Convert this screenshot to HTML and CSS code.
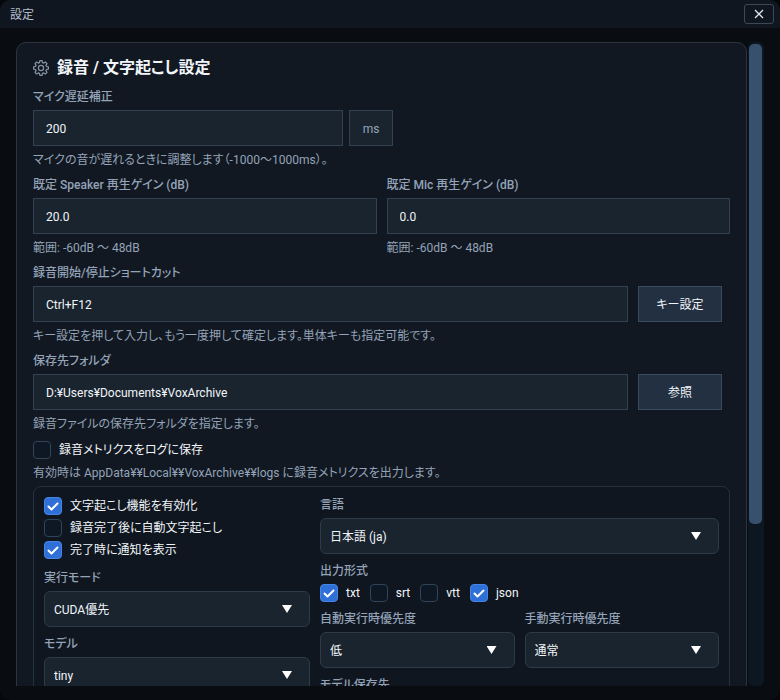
FILE: index.html
```
<!DOCTYPE html>
<html lang="ja">
<head>
    <meta charset="UTF-8">
    <meta name="viewport" content="width=device-width, initial-scale=1.0">
    <title>設定</title>
    <link rel="stylesheet" href="styles.css">
</head>
<body>
    <div class="window">
        <header class="titlebar">
            <span>設定</span>
            <button class="close" type="button" aria-label="閉じる">
                <svg width="10" height="10" viewBox="0 0 10 10"><path d="M1 1L9 9M9 1L1 9" stroke="currentColor" stroke-width="1.3" fill="none"/></svg>
            </button>
        </header>

        <div class="content">
            <main class="card">
                <h1>
                    <svg width="16" height="16" viewBox="0 0 16 16" fill="none" stroke="currentColor" stroke-width="1.2" stroke-linejoin="round">
                        <path d="M6.9.6h2.2l.4 2 1.2.5L12.4 2 14 3.6l-1.1 1.7.5 1.2 2 .4v2.2l-2 .4-.5 1.2 1.1 1.7-1.6 1.6-1.7-1.1-1.2.5-.4 2H6.9l-.4-2-1.2-.5L3.6 14 2 12.4l1.1-1.7-.5-1.2-2-.4V6.9l2-.4.5-1.2L2 3.6 3.6 2l1.7 1.1 1.2-.5z"/>
                        <circle cx="8" cy="8" r="2.6"/>
                    </svg>
                    録音 / 文字起こし設定
                </h1>

                <div class="field">
                    <label for="delay">マイク遅延補正</label>
                    <div class="row delay">
                        <input type="text" id="delay" value="200">
                        <span class="unit">ms</span>
                    </div>
                    <p class="hint">マイクの音が遅れるときに調整します（-1000～1000ms）。</p>
                </div>

                <div class="columns">
                    <div class="field">
                        <label for="speaker">既定 Speaker 再生ゲイン (dB)</label>
                        <input type="text" id="speaker" value="20.0">
                        <p class="hint">範囲: -60dB ～ 48dB</p>
                    </div>
                    <div class="field">
                        <label for="mic">既定 Mic 再生ゲイン (dB)</label>
                        <input type="text" id="mic" value="0.0">
                        <p class="hint">範囲: -60dB ～ 48dB</p>
                    </div>
                </div>

                <div class="field">
                    <label for="shortcut">録音開始/停止ショートカット</label>
                    <div class="row">
                        <input type="text" id="shortcut" value="Ctrl+F12">
                        <button class="btn" type="button">キー設定</button>
                    </div>
                    <p class="hint">キー設定を押して入力し、もう一度押して確定します。単体キーも指定可能です。</p>
                </div>

                <div class="field">
                    <label for="folder">保存先フォルダ</label>
                    <div class="row">
                        <input type="text" id="folder" value="D:¥Users¥Documents¥VoxArchive">
                        <button class="btn" type="button">参照</button>
                    </div>
                    <p class="hint">録音ファイルの保存先フォルダを指定します。</p>
                </div>

                <label class="check"><input type="checkbox">録音メトリクスをログに保存</label>
                <p class="hint">有効時は AppData¥¥Local¥¥VoxArchive¥¥logs に録音メトリクスを出力します。</p>

                <section class="panel">
                    <div>
                        <div class="checks">
                            <label class="check"><input type="checkbox" checked>文字起こし機能を有効化</label>
                            <label class="check"><input type="checkbox">録音完了後に自動文字起こし</label>
                            <label class="check"><input type="checkbox" checked>完了時に通知を表示</label>
                        </div>
                        <div class="option">
                            <label for="mode">実行モード</label>
                            <div class="select"><select id="mode"><option>CUDA優先</option></select></div>
                        </div>
                        <div class="option">
                            <label for="model">モデル</label>
                            <div class="select"><select id="model"><option>tiny</option></select></div>
                        </div>
                    </div>
                    <div>
                        <div class="option">
                            <label for="language">言語</label>
                            <div class="select"><select id="language"><option>日本語 (ja)</option></select></div>
                        </div>
                        <fieldset class="option">
                            <legend>出力形式</legend>
                            <div class="formats">
                                <label class="check"><input type="checkbox" checked>txt</label>
                                <label class="check"><input type="checkbox">srt</label>
                                <label class="check"><input type="checkbox">vtt</label>
                                <label class="check"><input type="checkbox" checked>json</label>
                            </div>
                        </fieldset>
                        <div class="columns">
                            <div class="option">
                                <label for="auto">自動実行時優先度</label>
                                <div class="select"><select id="auto"><option>低</option></select></div>
                            </div>
                            <div class="option">
                                <label for="manual">手動実行時優先度</label>
                                <div class="select"><select id="manual"><option>通常</option></select></div>
                            </div>
                        </div>
                        <div class="option">
                            <label for="modeldir">モデル保存先</label>
                            <input type="text" id="modeldir">
                        </div>
                    </div>
                </section>
            </main>
            <div class="scrollbar"><div class="thumb"></div></div>
        </div>
    </div>
</body>
</html>
```
FILE: styles.css
```
* {
    box-sizing: border-box;
}

body {
    margin: 0;
    background-color: #05070a;
    color: #f1f5f9;
    font-family: Roboto, "Noto Sans CJK JP", sans-serif;
    font-size: 12px;
    line-height: 16px;
    font-feature-settings: "palt";
}

input, select, button {
    color: inherit;
    font: inherit;
    font-feature-settings: inherit;
}

.window {
    display: flex;
    flex-direction: column;
    height: 100vh;
    border-radius: 10px;
    background-color: #090d12;
    overflow: hidden;
}

.titlebar {
    display: flex;
    flex: none;
    justify-content: space-between;
    align-items: center;
    height: 28px;
    padding: 0 6px 0 10px;
    background-color: #0f1620;
    color: #b4bfcc;
}

.titlebar span {
    padding-top: 2px;
}

.close {
    display: flex;
    justify-content: center;
    align-items: center;
    width: 30px;
    height: 20px;
    padding: 0;
    border: 1px solid #3d4856;
    border-radius: 3px;
    background: none;
    color: #e2e8f0;
}

.content {
    display: flex;
    flex: 1;
    gap: 1px;
    min-height: 0;
    margin: 14px 16px;
    overflow: hidden;
}

.card {
    flex: 1;
    align-self: flex-start;
    padding: 13px 16px;
    border: 1px solid #2a3542;
    border-radius: 10px;
    background-color: #111821;
}

h1 {
    display: flex;
    align-items: center;
    gap: 8px;
    margin: 0 0 9px;
    font-size: 16px;
    line-height: 24px;
    font-weight: bold;
}

h1 svg {
    color: #8794a6;
}

.field > label,
.option > label,
legend {
    display: block;
    margin-bottom: 5px;
    padding: 0;
    color: #94a3b8;
    font-weight: 500;
}

.hint {
    margin: 6px 0 0;
    color: #94a3b8;
}

.field .hint {
    margin-bottom: 9px;
}

input[type="text"] {
    display: block;
    width: 100%;
    height: 36px;
    padding: 2px 12px 0;
    border: 1px solid #324051;
    border-radius: 0;
    background-color: #1a242f;
}

.row {
    display: flex;
    gap: 10px;
    padding-right: 8px;
}

.row input[type="text"] {
    flex: 1;
    min-width: 0;
}

.delay {
    gap: 6px;
    width: 360px;
    padding: 0;
}

.unit {
    width: 44px;
    height: 36px;
    padding-top: 1px;
    border: 1px solid #324051;
    background-color: #1a242f;
    color: #94a3b8;
    line-height: 34px;
    text-align: center;
}

.btn {
    width: 84px;
    height: 36px;
    padding: 2px 0 0;
    border: 1px solid #3a4c63;
    background-color: #223041;
}

.columns {
    display: grid;
    grid-template-columns: 1fr 1fr;
    gap: 10px;
}

.check {
    display: flex;
    align-items: center;
    gap: 8px;
    height: 18px;
}

input[type="checkbox"] {
    appearance: none;
    width: 18px;
    height: 18px;
    margin: 0;
    border: 1px solid #30445a;
    border-radius: 4px;
    background-color: #0d1824;
}

input[type="checkbox"]:checked {
    border-color: #4585e6;
    background: #2f6fd8 url("data:image/svg+xml,%3Csvg xmlns='http://www.w3.org/2000/svg' viewBox='0 0 16 16'%3E%3Cpath d='M3.5 8.5l3 3 6-6' fill='none' stroke='white' stroke-width='2' stroke-linecap='round' stroke-linejoin='round'/%3E%3C/svg%3E") center / 16px;
}

.panel {
    display: grid;
    grid-template-columns: 2fr 3fr;
    gap: 10px;
    margin-top: 5px;
    padding: 10px;
    border: 1px solid #26313e;
    border-radius: 8px;
    background-color: #0f161f;
}

.checks {
    display: flex;
    flex-direction: column;
    gap: 4px;
    padding-bottom: 11px;
}

.option {
    margin: 0 0 9px;
    padding: 0;
    border: none;
}

.formats {
    display: flex;
    gap: 10px;
}

.select {
    position: relative;
}

.select::after {
    content: "";
    position: absolute;
    top: 14px;
    right: 18px;
    width: 10px;
    height: 8px;
    background-color: #fff;
    clip-path: polygon(0 0, 100% 0, 50% 100%);
    pointer-events: none;
}

select {
    display: block;
    appearance: none;
    width: 100%;
    height: 36px;
    padding: 2px 36px 0 9px;
    border: 1px solid #2d3a48;
    border-radius: 6px;
    background-color: #1a242f;
}

.scrollbar {
    flex: none;
    width: 16px;
    padding: 2px 2px 2px 1px;
    border-radius: 6px;
    background-color: #0d1722;
}

.thumb {
    height: 75%;
    border-radius: 5px;
    background-color: #36506e;
}
```
